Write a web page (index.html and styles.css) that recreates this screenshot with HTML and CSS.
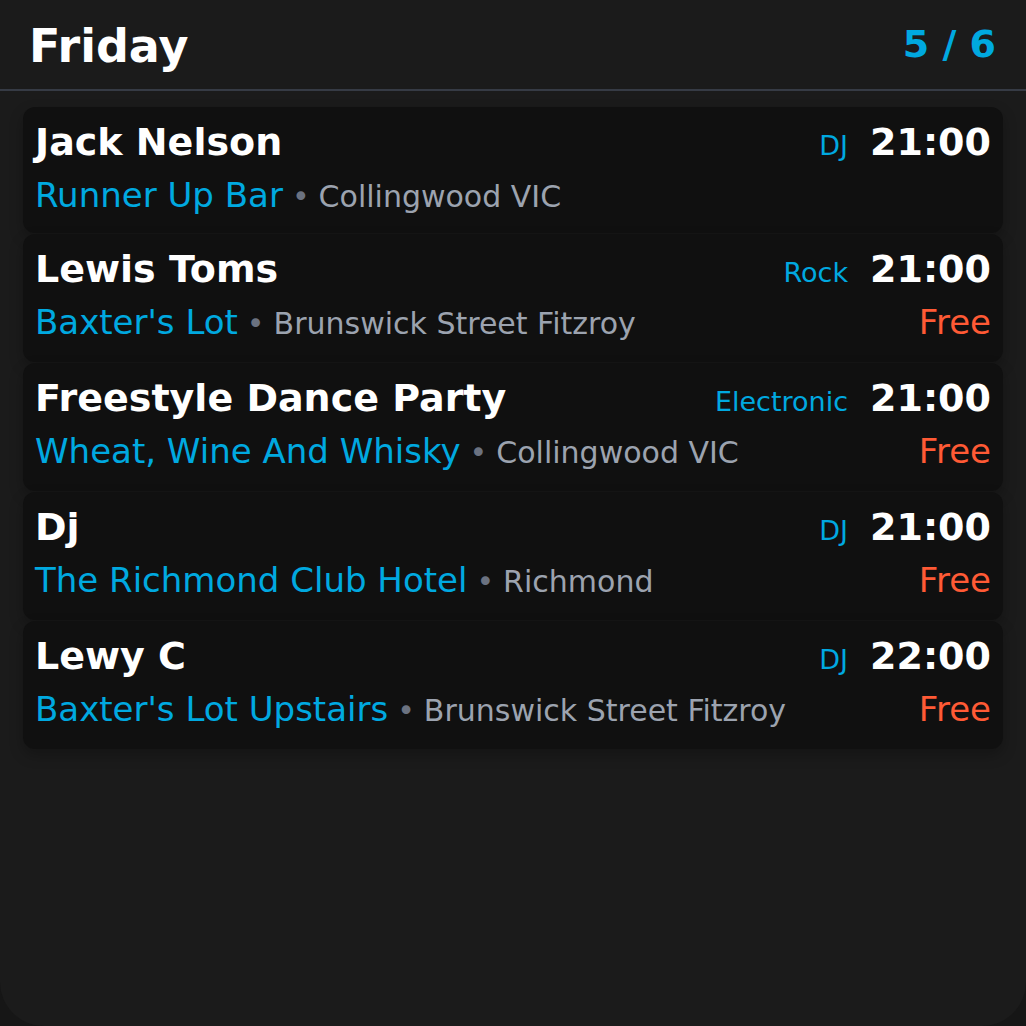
FILE: index.html
```html
<!DOCTYPE html>
<html>
<head>
<meta charset="utf-8">
<link rel="stylesheet" href="styles.css">
</head>
<body>
<div class="app">
  <header class="header">
    <h1 class="day">Friday</h1>
    <div class="count">5 / 6</div>
  </header>
  <div class="list">
    <div class="card card-short">
      <div class="row top">
        <div class="name">Jack Nelson</div>
        <div class="meta"><span class="genre">DJ</span><span class="time">21:00</span></div>
      </div>
      <div class="row bottom">
        <div class="place"><span class="venue">Runner Up Bar</span><span class="dot">•</span><span class="loc">Collingwood VIC</span></div>
        <div class="price"></div>
      </div>
    </div>
    <div class="card">
      <div class="row top">
        <div class="name">Lewis Toms</div>
        <div class="meta"><span class="genre">Rock</span><span class="time">21:00</span></div>
      </div>
      <div class="row bottom">
        <div class="place"><span class="venue">Baxter's Lot</span><span class="dot">•</span><span class="loc">Brunswick Street Fitzroy</span></div>
        <div class="price">Free</div>
      </div>
    </div>
    <div class="card">
      <div class="row top">
        <div class="name">Freestyle Dance Party</div>
        <div class="meta"><span class="genre">Electronic</span><span class="time">21:00</span></div>
      </div>
      <div class="row bottom">
        <div class="place"><span class="venue">Wheat, Wine And Whisky</span><span class="dot">•</span><span class="loc">Collingwood VIC</span></div>
        <div class="price">Free</div>
      </div>
    </div>
    <div class="card">
      <div class="row top">
        <div class="name">Dj</div>
        <div class="meta"><span class="genre">DJ</span><span class="time">21:00</span></div>
      </div>
      <div class="row bottom">
        <div class="place"><span class="venue">The Richmond Club Hotel</span><span class="dot">•</span><span class="loc">Richmond</span></div>
        <div class="price">Free</div>
      </div>
    </div>
    <div class="card">
      <div class="row top">
        <div class="name">Lewy C</div>
        <div class="meta"><span class="genre">DJ</span><span class="time">22:00</span></div>
      </div>
      <div class="row bottom">
        <div class="place"><span class="venue">Baxter's Lot Upstairs</span><span class="dot">•</span><span class="loc">Brunswick Street Fitzroy</span></div>
        <div class="price">Free</div>
      </div>
    </div>
  </div>
</div>
</body>
</html>
```
FILE: styles.css
```css
html, body {
  margin: 0;
  padding: 0;
  background: #161616;
}
body {
  font-family: "DejaVu Sans", sans-serif;
  color: #fff;
}
.app {
  width: 1026px;
  height: 1026px;
  background: #1b1b1b;
  border-radius: 0 0 44px 44px;
  overflow: hidden;
}
.header {
  display: flex;
  align-items: center;
  justify-content: space-between;
  padding: 0 30px 0 29px;
  box-sizing: border-box;
  height: 91px;
  border-bottom: 2px solid #363b45;
}
.day {
  margin: 0;
  font-size: 46px;
  font-weight: bold;
  margin-top: 2px;
}
.count {
  font-size: 38px;
  font-weight: bold;
  color: #00a9e0;
  margin-top: -2px;
}
.list {
  padding: 16px 23px;
  display: flex;
  flex-direction: column;
  gap: 1px;
}
.card {
  background: #101010;
  border-radius: 12px;
  padding: 13px 12px 0;
  height: 128px;
  box-sizing: border-box;
  box-shadow: 0 6px 14px rgba(0,0,0,0.25);
}
.card-short {
  height: 126px;
}
.row {
  display: flex;
  justify-content: space-between;
  align-items: baseline;
}
.top {
  height: 44px;
}
.bottom {
  margin-top: 11px;
  height: 40px;
}
.name {
  font-size: 38px;
  font-weight: bold;
  line-height: 44px;
}
.meta {
  display: flex;
  align-items: baseline;
}
.genre {
  font-size: 27px;
  color: #00a9e0;
  margin-right: 22px;
}
.time {
  font-size: 38px;
  font-weight: bold;
  line-height: 44px;
}
.place {
  white-space: nowrap;
}
.venue {
  font-size: 34px;
  line-height: 40px;
  color: #00a9e0;
}
.dot {
  font-size: 30px;
  color: #6b7280;
  margin: 0 9px;
}
.loc {
  font-size: 30px;
  color: #9ca3af;
}
.price {
  font-size: 34px;
  line-height: 40px;
  color: #ff5a35;
}
```
